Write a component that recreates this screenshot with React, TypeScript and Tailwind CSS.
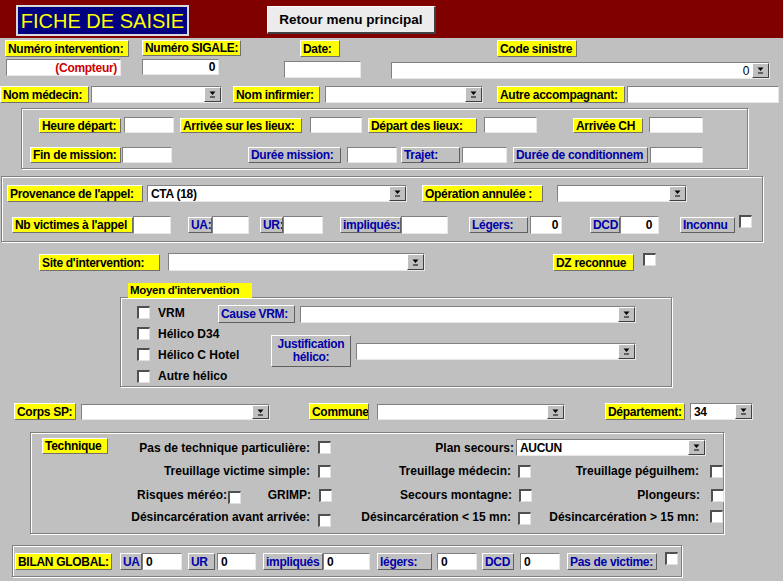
import React from "react";

type P = { c?: string; children?: React.ReactNode };

function Lbl({ c = "", children }: P) {
  return (
    <div
      className={`${c} shrink-0 flex items-center pl-[2px] whitespace-nowrap overflow-hidden leading-none bg-[#ffff00] text-black border-t border-l border-r border-b border-t-[#ffffff] border-l-[#ffffff] border-r-[#707070] border-b-[#707070]`}
    >
      {children}
    </div>
  );
}

function Blu({ c = "", children }: P) {
  return (
    <div
      className={`${c} shrink-0 flex items-center pl-[2px] whitespace-nowrap overflow-hidden leading-none bg-[#c0c0c0] text-[#0000a8] border-t border-l border-r border-b border-t-[#ffffff] border-l-[#ffffff] border-r-[#606060] border-b-[#606060]`}
    >
      {children}
    </div>
  );
}

function Inp({ c = "", children }: P) {
  return (
    <div
      className={`${c} shrink-0 flex items-center px-[3px] whitespace-nowrap overflow-hidden leading-none bg-white border-t border-l border-r border-b border-t-[#808080] border-l-[#808080] border-r-[#e8e8e8] border-b-[#e8e8e8]`}
    >
      {children}
    </div>
  );
}

function Arrow() {
  return (
    <svg width="7" height="7" viewBox="0 0 7 7">
      <polygon points="0.5,0.5 6.5,0.5 3.5,4" fill="#000" />
      <rect x="1" y="5.5" width="5" height="1" fill="#000" />
    </svg>
  );
}

function Combo({ c = "", children, right = false }: P & { right?: boolean }) {
  return (
    <div
      className={`${c} shrink-0 flex items-stretch leading-none bg-white border-t border-l border-r border-b border-t-[#808080] border-l-[#808080] border-r-[#e8e8e8] border-b-[#e8e8e8]`}
    >
      <div
        className={`flex-1 flex items-center px-[3px] whitespace-nowrap overflow-hidden ${right ? "justify-end" : ""}`}
      >
        {children}
      </div>
      <div className="w-[17px] shrink-0 flex items-center justify-center bg-[#c0c0c0] border-t border-l border-r border-b border-t-[#ffffff] border-l-[#ffffff] border-r-[#404040] border-b-[#404040]">
        <Arrow />
      </div>
    </div>
  );
}

function Chk({ c = "" }: { c?: string }) {
  return (
    <div
      className={`${c} shrink-0 w-[13px] h-[13px] bg-white border-t-2 border-l-2 border-r border-b border-t-[#505050] border-l-[#505050] border-r-[#e0e0e0] border-b-[#e0e0e0]`}
    />
  );
}

function Frame({ c = "", children }: P) {
  return (
    <div
      className={`${c} border border-[#808080] shadow-[1px_1px_0_#ffffff,inset_1px_1px_0_#ffffff]`}
    >
      {children}
    </div>
  );
}

function Cell({ c = "", children }: P) {
  return (
    <div className={`${c} shrink-0 text-right whitespace-nowrap leading-none tracking-normal`}>
      {children}
    </div>
  );
}

export default function App() {
  return (
    <div className="w-[783px] h-[581px] overflow-hidden bg-[#c0c0c0] text-black text-[12px] tracking-[-0.3px] font-bold font-['Liberation_Sans',Arial,sans-serif]">
      {/* Header */}
      <div className="h-[38px] bg-[#800000] flex items-start tracking-normal">
        <div className="ml-[16px] mt-[5px] w-[173px] h-[31px] bg-[#000080] border-2 border-[#d8d8d8] flex items-center justify-center text-[20px] font-normal text-[#ffff00] leading-none whitespace-nowrap">
          FICHE DE SAISIE
        </div>
        <div className="ml-[78px] mt-[6px] w-[169px] h-[28px] bg-[#ececec] flex items-center justify-center text-[13.5px] font-bold leading-none border-t border-l border-r-2 border-b-2 border-t-[#ffffff] border-l-[#ffffff] border-r-[#404040] border-b-[#404040]">
          Retour menu principal
        </div>
      </div>

      {/* Row A */}
      <div className="mt-[2px] h-[17px] flex items-start">
        <Lbl c="ml-[5px] w-[124px] h-[17px]">Numéro intervention:</Lbl>
        <Lbl c="ml-[13px] w-[99px] h-[16px]">Numéro SIGALE:</Lbl>
        <Lbl c="ml-[59px] w-[40px] h-[17px]">Date:</Lbl>
        <Lbl c="ml-[157px] w-[80px] h-[17px]">Code sinistre</Lbl>
      </div>

      {/* Row B */}
      <div className="mt-[2px] h-[21px] flex items-start">
        <Inp c="ml-[6px] w-[115px] h-[17px] justify-end text-[#cc0000]">(Compteur)</Inp>
        <Inp c="ml-[21px] w-[77px] h-[16px] justify-end">0</Inp>
        <Inp c="ml-[65px] mt-[2px] w-[77px] h-[17px]" />
        <Combo c="ml-[30px] mt-[3px] w-[379px] h-[17px] font-normal" right>
          0
        </Combo>
      </div>

      {/* Row C */}
      <div className="mt-[6px] h-[18px] flex items-start">
        <Lbl c="w-[89px] h-[17px]">Nom médecin:</Lbl>
        <Combo c="ml-[2px] w-[131px] h-[17px]" />
        <Lbl c="ml-[11px] w-[87px] h-[17px]">Nom infirmier:</Lbl>
        <Combo c="ml-[5px] w-[158px] h-[17px]" />
        <Lbl c="ml-[14px] w-[128px] h-[17px]">Autre accompagnant:</Lbl>
        <Inp c="ml-[2px] w-[152px] h-[17px]" />
      </div>

      {/* Times frame */}
      <Frame c="ml-[21px] mt-[4px] w-[727px] h-[61px]">
        <div className="mt-[8px] h-[16px] flex items-start">
          <Lbl c="ml-[17px] mt-[1px] w-[82px] h-[15px]">Heure départ:</Lbl>
          <Inp c="ml-[3px] w-[50px] h-[16px]" />
          <Lbl c="ml-[6px] mt-[1px] w-[122px] h-[15px]">Arrivée sur les lieux:</Lbl>
          <Inp c="ml-[8px] w-[52px] h-[16px]" />
          <Lbl c="ml-[6px] mt-[1px] w-[109px] h-[15px]">Départ des lieux:</Lbl>
          <Inp c="ml-[7px] w-[53px] h-[16px]" />
          <Lbl c="ml-[36px] mt-[1px] w-[70px] h-[15px]">Arrivée CH</Lbl>
          <Inp c="ml-[6px] w-[54px] h-[16px]" />
        </div>
        <div className="mt-[14px] h-[16px] flex items-start">
          <Lbl c="ml-[8px] w-[91px] h-[16px]">Fin de mission:</Lbl>
          <Inp c="ml-[1px] w-[50px] h-[16px]" />
          <Blu c="ml-[76px] w-[93px] h-[16px]">Durée mission:</Blu>
          <Inp c="ml-[6px] w-[50px] h-[16px]" />
          <Blu c="ml-[4px] w-[59px] h-[16px]">Trajet:</Blu>
          <Inp c="ml-[2px] w-[45px] h-[16px]" />
          <Blu c="ml-[6px] w-[135px] h-[16px]">Durée de conditionnem</Blu>
          <Inp c="ml-[2px] w-[53px] h-[16px]" />
        </div>
      </Frame>

      {/* Provenance frame */}
      <Frame c="ml-[1px] mt-[7px] w-[762px] h-[66px]">
        <div className="mt-[8px] h-[17px] flex items-start">
          <Lbl c="ml-[5px] w-[136px] h-[17px]">Provenance de l'appel:</Lbl>
          <Combo c="ml-[4px] w-[260px] h-[17px]">CTA (18)</Combo>
          <Lbl c="ml-[15px] w-[121px] h-[17px]">Opération annulée :</Lbl>
          <Combo c="ml-[14px] w-[130px] h-[17px]" />
        </div>
        <div className="mt-[14px] h-[18px] flex items-start">
          <Lbl c="ml-[10px] mt-[1px] w-[121px] h-[16px]">Nb victimes à l'appel</Lbl>
          <Inp c="w-[38px] h-[18px]" />
          <Blu c="ml-[17px] mt-[1px] w-[24px] h-[16px]">UA:</Blu>
          <Inp c="w-[37px] h-[18px]" />
          <Blu c="ml-[11px] mt-[1px] w-[23px] h-[16px]">UR:</Blu>
          <Inp c="w-[40px] h-[18px]" />
          <Blu c="ml-[17px] mt-[1px] w-[61px] h-[16px]">impliqués:</Blu>
          <Inp c="w-[47px] h-[18px]" />
          <Blu c="ml-[21px] mt-[1px] w-[59px] h-[16px]">Légers:</Blu>
          <Inp c="ml-[2px] w-[32px] h-[18px] justify-end">0</Inp>
          <Blu c="ml-[28px] mt-[1px] w-[30px] h-[16px]">DCD</Blu>
          <Inp c="w-[39px] h-[18px] justify-end pr-[6px]">0</Inp>
          <Blu c="ml-[21px] mt-[1px] w-[55px] h-[16px]">Inconnu</Blu>
          <Chk c="ml-[4px] -mt-[1px]" />
        </div>
      </Frame>

      {/* Site row */}
      <div className="mt-[11px] h-[18px] flex items-start">
        <Lbl c="ml-[39px] mt-[1px] w-[121px] h-[17px]">Site d'intervention:</Lbl>
        <Combo c="ml-[8px] w-[257px] h-[18px]" />
        <Lbl c="ml-[128px] mt-[1px] w-[81px] h-[17px]">DZ reconnue</Lbl>
        <Chk c="ml-[9px]" />
      </div>

      {/* Moyen d'intervention */}
      <div className="mt-[12px] ml-[120px] w-[552px]">
        <div className="relative z-10 ml-[8px] w-[124px] h-[15px] bg-[#ffff00] flex items-center pl-[2px] leading-none whitespace-nowrap text-[11.5px]">
          Moyen d'intervention
        </div>
        <Frame c="-mt-[1px] w-[552px] h-[90px]">
          <div className="mt-[7px] h-[18px] flex items-start">
            <div className="ml-[16px] mt-[1px] w-[81px] h-[13px] shrink-0 flex items-center tracking-normal">
              <Chk />
              <span className="ml-[8px] leading-none">VRM</span>
            </div>
            <Blu c="w-[77px] h-[18px]">Cause VRM:</Blu>
            <Combo c="ml-[5px] mt-[1px] w-[336px] h-[17px]" />
          </div>
          <div className="flex items-start">
            <div className="ml-[16px] w-[134px] shrink-0 flex flex-col tracking-normal">
              <div className="h-[21px] flex items-center">
                <Chk />
                <span className="ml-[8px] leading-none">Hélico D34</span>
              </div>
              <div className="h-[21px] flex items-center">
                <Chk />
                <span className="ml-[8px] leading-none">Hélico C Hotel</span>
              </div>
              <div className="h-[22px] flex items-center">
                <Chk />
                <span className="ml-[8px] leading-none">Autre hélico</span>
              </div>
            </div>
            <div className="mt-[12px] w-[80px] h-[32px] shrink-0 flex flex-col items-center justify-center text-center leading-[13px] bg-[#c0c0c0] text-[#0000a8] border-t border-l border-r border-b border-t-[#ffffff] border-l-[#ffffff] border-r-[#606060] border-b-[#606060]">
              <span>Justification</span>
              <span>hélico:</span>
            </div>
            <Combo c="ml-[5px] mt-[20px] w-[280px] h-[17px]" />
          </div>
        </Frame>
      </div>

      {/* Corps row */}
      <div className="mt-[16px] h-[17px] flex items-start">
        <Lbl c="ml-[14px] w-[62px] h-[17px]">Corps SP:</Lbl>
        <Combo c="ml-[5px] mt-[1px] w-[189px] h-[16px]" />
        <Lbl c="ml-[39px] w-[60px] h-[17px]">Commune</Lbl>
        <Combo c="ml-[8px] mt-[1px] w-[188px] h-[16px]" />
        <Lbl c="ml-[40px] w-[80px] h-[17px]">Département:</Lbl>
        <Combo c="ml-[5px] w-[63px] h-[17px]">34</Combo>
      </div>

      {/* Technique frame */}
      <Frame c="ml-[30px] mt-[12px] w-[694px] h-[102px]">
        <div className="mt-[5px] h-[19px] flex items-center">
          <Lbl c="ml-[11px] self-start w-[66px] h-[16px]">Technique</Lbl>
          <Cell c="w-[202px]">Pas de technique particulière:</Cell>
          <Chk c="ml-[8px]" />
          <Cell c="w-[183px]">Plan secours:</Cell>
          <Combo c="ml-[2px] w-[190px] h-[17px]">AUCUN</Combo>
        </div>
        <div className="mt-[6px] h-[15px] flex items-center">
          <Cell c="w-[279px]">Treuillage victime simple:</Cell>
          <Chk c="ml-[8px] mt-[2px]" />
          <Cell c="w-[180px]">Treuillage médecin:</Cell>
          <Chk c="ml-[7px] mt-[2px]" />
          <Cell c="w-[168px]">Treuillage péguilhem:</Cell>
          <Chk c="ml-[11px] mt-[2px]" />
        </div>
        <div className="mt-[9px] h-[15px] flex items-center">
          <Cell c="w-[196px]">Risques méréo:</Cell>
          <Chk c="ml-[1px] mt-[6px]" />
          <Cell c="w-[70px]">GRIMP:</Cell>
          <Chk c="ml-[8px] mt-[2px]" />
          <Cell c="w-[180px]">Secours montagne:</Cell>
          <Chk c="ml-[7px] mt-[2px]" />
          <Cell c="w-[168px]">Plongeurs:</Cell>
          <Chk c="ml-[11px] mt-[2px]" />
        </div>
        <div className="mt-[6px] h-[18px] flex items-center">
          <Cell c="w-[279px]">Désincarcération avant arrivée:</Cell>
          <Chk c="ml-[8px] mt-[6px]" />
          <Cell c="w-[180px]">Désincarcération &lt; 15 mn:</Cell>
          <Chk c="ml-[7px] mt-[2px]" />
          <Cell c="w-[168px]">Désincarcération &gt; 15 mn:</Cell>
          <Chk c="ml-[11px] -mt-[2px]" />
        </div>
      </Frame>

      {/* Bilan frame */}
      <Frame c="ml-[12px] mt-[11px] w-[670px] h-[32px]">
        <div className="mt-[7px] h-[17px] flex items-start">
          <Lbl c="ml-[2px] w-[97px] h-[17px]">BILAN GLOBAL:</Lbl>
          <Blu c="ml-[8px] w-[22px] h-[17px]">UA</Blu>
          <Inp c="w-[40px] h-[17px]">0</Inp>
          <Blu c="ml-[6px] w-[27px] h-[17px]">UR</Blu>
          <Inp c="ml-[2px] w-[39px] h-[17px]">0</Inp>
          <Blu c="ml-[7px] w-[60px] h-[17px]">impliqués</Blu>
          <Inp c="w-[47px] h-[17px]">0</Inp>
          <Blu c="ml-[7px] w-[55px] h-[17px]">légers:</Blu>
          <Inp c="ml-[5px] w-[40px] h-[17px]">0</Inp>
          <Blu c="ml-[5px] w-[32px] h-[17px]">DCD</Blu>
          <Inp c="ml-[6px] w-[40px] h-[17px]">0</Inp>
          <Blu c="ml-[7px] w-[90px] h-[17px]">Pas de victime:</Blu>
          <Chk c="ml-[8px] -mt-[1px]" />
        </div>
      </Frame>
    </div>
  );
}
